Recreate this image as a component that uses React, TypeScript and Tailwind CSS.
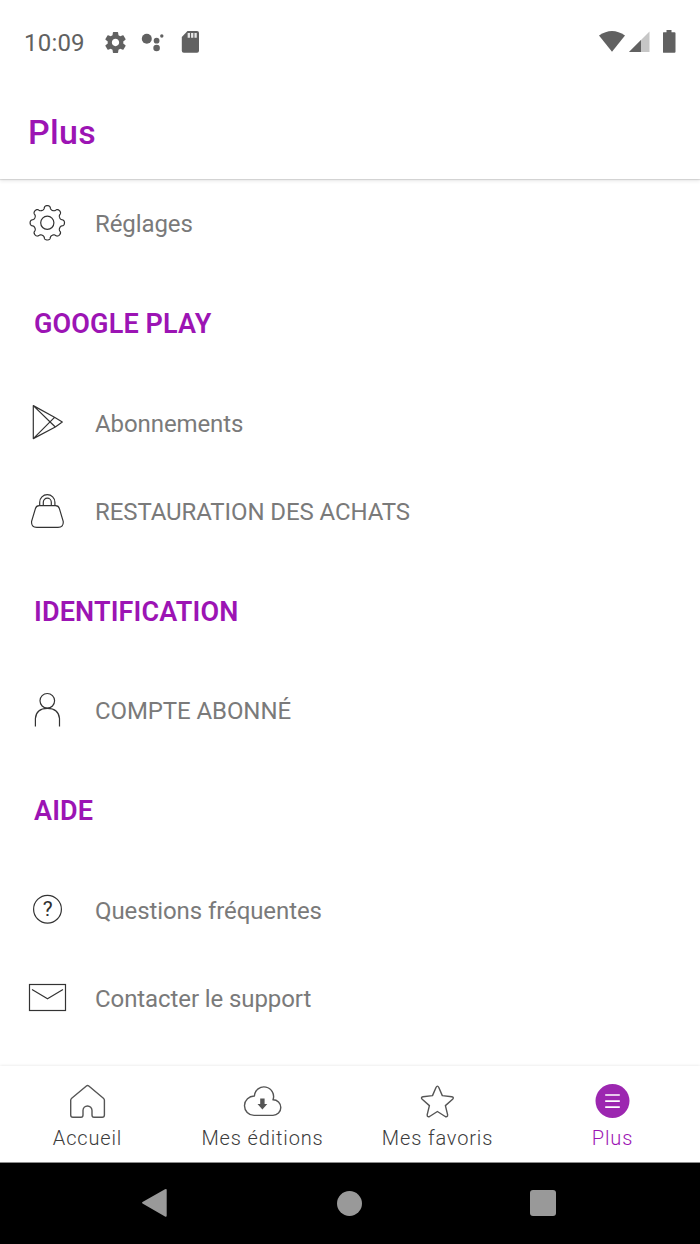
import type { ReactNode } from "react";

interface MenuItem {
  label: string;
  icon: ReactNode;
}

interface MenuSection {
  title?: string;
  items: MenuItem[];
}

// eight-lobed outline around (20.3, 19.8)
const gearPath = (() => {
  const points: string[] = [];
  for (let i = 0; i < 240; i++) {
    const a = (i / 240) * Math.PI * 2;
    const r = 15.3 + 1.9 * Math.cos(8 * a);
    const t = a + 0.035 * Math.sin(16 * a);
    points.push(
      `${(20.3 + r * Math.cos(t)).toFixed(2)} ${(19.8 + r * Math.sin(t)).toFixed(2)}`
    );
  }
  return `M${points.join("L")}Z`;
})();

function MenuIcon({ children }: { children: ReactNode }) {
  return (
    <svg
      viewBox="0 0 40 40"
      className="w-10 h-10 shrink-0"
      fill="none"
      stroke="#333333"
      strokeWidth="1.2"
      strokeLinejoin="round"
    >
      {children}
    </svg>
  );
}

const sections: MenuSection[] = [
  {
    items: [
      {
        label: "Réglages",
        icon: (
          <MenuIcon>
            <path d={gearPath} />
            <circle cx="20.3" cy="19.8" r="6.6" />
          </MenuIcon>
        ),
      },
    ],
  },
  {
    title: "GOOGLE PLAY",
    items: [
      {
        label: "Abonnements",
        icon: (
          <MenuIcon>
            <path d="M6.3 2.6V35.6L28.3 24L35.3 19L27.5 14.3L6.3 2.6L28.3 24M6.3 35.6L27.5 14.3" />
          </MenuIcon>
        ),
      },
      {
        label: "RESTAURATION DES ACHATS",
        icon: (
          <MenuIcon>
            <path d="M12.2 14.6H28.5Q31.6 14.6 32.4 17.6L36.2 30.3Q36.8 36.3 31 36.3H9.8Q4 36.3 4.6 30.3L8.4 17.6Q9.2 14.6 12.2 14.6Z" />
            <path d="M12.7 14.4V11.2A7.6 7.6 0 0 1 27.9 11.2V14.4M16.3 14.4V11.2A4 4 0 0 1 24.3 11.2V14.4" />
          </MenuIcon>
        ),
      },
    ],
  },
  {
    title: "IDENTIFICATION",
    items: [
      {
        label: "COMPTE ABONNÉ",
        icon: (
          <MenuIcon>
            <circle cx="20.3" cy="10.8" r="7.3" />
            <path d="M8.4 36.6V28.5Q9.2 18.4 20.4 18.4Q31.6 18.4 32.5 28.5V36.6" />
          </MenuIcon>
        ),
      },
    ],
  },
  {
    title: "AIDE",
    items: [
      {
        label: "Questions fréquentes",
        icon: (
          <MenuIcon>
            <circle cx="20.5" cy="19.2" r="13.9" />
            <text
              x="20.7"
              y="26.2"
              textAnchor="middle"
              fill="#2f2f2f"
              stroke="none"
              className="font-['Roboto',sans-serif] text-[21px]"
            >
              ?
            </text>
          </MenuIcon>
        ),
      },
      {
        label: "Contacter le support",
        icon: (
          <MenuIcon>
            <rect x="2.5" y="6.5" width="36" height="26" strokeLinejoin="miter" />
            <path d="M5 11.5L20.5 20.8L36 11.5" />
          </MenuIcon>
        ),
      },
    ],
  },
];

function TabIcon({ children }: { children: ReactNode }) {
  return (
    <svg
      viewBox="0 0 41 40"
      className="w-[41px] h-10"
      fill="none"
      stroke="#555555"
      strokeWidth="1.4"
      strokeLinejoin="round"
    >
      {children}
    </svg>
  );
}

const tabs = [
  {
    label: "Accueil",
    active: false,
    icon: (
      <TabIcon>
        <path d="M3.7 19.2Q3.7 18 4.7 17.2L19.4 5Q20.6 4 21.8 5L36.4 17.2Q37.4 18 37.4 19.2V34Q37.4 36.3 35.2 36.3H27Q25 36.3 25 34V29.5A4.5 4.5 0 0 0 16 29.5V34Q16 36.3 14 36.3H5.9Q3.7 36.3 3.7 34Z" />
      </TabIcon>
    ),
  },
  {
    label: "Mes éditions",
    active: false,
    icon: (
      <TabIcon>
        <path d="M12 34.4A9.7 9.7 0 0 1 12.4 15A9.6 9.6 0 1 1 31 18.8A7.8 7.8 0 0 1 31 34.4Z" />
        <path
          d="M18.2 17.4H22.6V23H25.3L20.4 28.4L15.5 23H18.2Z"
          fill="#555555"
          stroke="none"
        />
      </TabIcon>
    ),
  },
  {
    label: "Mes favoris",
    active: false,
    icon: (
      <TabIcon>
        <path d="M19 6.5Q20.4 3.8 21.8 6.5L25.3 14.6L34.8 15.7Q37.4 16.3 35.6 18.3L28.4 24.6L30.6 33.7Q30.8 36.5 28.2 35.5L20.4 30.5L12.6 35.5Q10 36.5 10.2 33.7L12.4 24.6L5.2 18.3Q3.4 16.3 6 15.7L15.5 14.6Z" />
      </TabIcon>
    ),
  },
  {
    label: "Plus",
    active: true,
    icon: (
      <TabIcon>
        <circle cx="20.5" cy="20" r="17" fill="#9c27b0" stroke="none" />
        <path d="M13.2 14H27.8M13.2 20.2H27.8M13.2 26.2H27.8" stroke="#ffffff" strokeWidth="1.7" />
      </TabIcon>
    ),
  },
];

function StatusBar() {
  return (
    <div className="flex h-[84px] shrink-0 items-center pl-6 pr-6 text-[#616161]">
      <span className="w-[79px] pt-0.5 text-[24px] leading-none tracking-[0.2px]">10:09</span>
      <svg viewBox="0 0 24 24" className="w-[25px] h-[25px]" fill="currentColor">
        <path d="M19.43 12.98c.04-.32.07-.64.07-.98s-.03-.66-.07-.98l2.11-1.65c.19-.15.24-.42.12-.64l-2-3.46c-.12-.22-.39-.3-.61-.22l-2.49 1c-.52-.4-1.08-.73-1.69-.98l-.38-2.65C14.46 2.18 14.25 2 14 2h-4c-.25 0-.46.18-.49.42l-.38 2.65c-.61.25-1.17.59-1.69.98l-2.49-1c-.23-.09-.49 0-.61.22l-2 3.46c-.13.22-.07.49.12.64l2.11 1.65c-.04.32-.07.65-.07.98s.03.66.07.98l-2.11 1.65c-.19.15-.24.42-.12.64l2 3.46c.12.22.39.3.61.22l2.49-1c.52.4 1.08.73 1.69.98l.38 2.65c.03.24.24.42.49.42h4c.25 0 .46-.18.49-.42l.38-2.65c.61-.25 1.17-.59 1.69-.98l2.49 1c.23.09.49 0 .61-.22l2-3.46c.12-.22.07-.49-.12-.64l-2.11-1.65zM12 15.5c-1.93 0-3.5-1.57-3.5-3.5s1.57-3.5 3.5-3.5 3.5 1.57 3.5 3.5-1.57 3.5-3.5 3.5z" />
      </svg>
      <svg viewBox="0 0 24 24" className="ml-3 w-6 h-6" fill="currentColor">
        <circle cx="6.8" cy="8.7" r="5" />
        <circle cx="16.6" cy="10.7" r="2.9" />
        <circle cx="21.8" cy="6" r="1.7" />
        <circle cx="16.6" cy="18" r="3.3" />
      </svg>
      <svg viewBox="0 0 20 24" className="ml-4 w-5 h-6" fill="currentColor">
        <path d="M7.5 1H17Q19 1 19 3V20.7Q19 22.7 17 22.7H3.8Q1.8 22.7 1.8 20.7V7Z" />
        <path d="M8.8 3V7.7M12.2 3V7.7M15.6 3V7.7" stroke="#ffffff" strokeOpacity="0.85" strokeWidth="2.3" />
      </svg>
      <div className="ml-auto flex items-center">
        <svg viewBox="0 0 26 24" className="w-[26px] h-6" fill="currentColor">
          <path d="M0 5.5Q13-3.5 26 5.5L13 21.7Z" />
        </svg>
        <svg viewBox="0 0 22 24" className="ml-1 w-[22px] h-6" fill="currentColor">
          <path d="M20.5 1.5V22H0Z" fill="#c6c6c6" />
          <path d="M12 10V22H0Z" />
        </svg>
        <svg viewBox="0 0 13 24" className="ml-3 w-[13px] h-6" fill="currentColor">
          <path d="M3.5 0H8.5V2.2H11.5Q12.5 2.2 12.5 3.2V21.8Q12.5 22.8 11.5 22.8H0.8Q-.2 22.8-.2 21.8V3.2Q-.2 2.2 .8 2.2H3.5Z" />
        </svg>
      </div>
    </div>
  );
}

function NavigationBar() {
  return (
    <div className="flex h-[81px] shrink-0 items-center bg-black pb-px pl-[141px]">
      <svg viewBox="0 0 26 30" className="w-[26px] h-[30px]" fill="#999999">
        <path d="M24 1.3Q25.7 .3 25.7 2V27.5Q25.7 29.3 24 28.5L1.5 15.5Q0.5 14.7 1.5 14Z" />
      </svg>
      <div className="ml-[170px] w-[25px] h-[25px] rounded-full bg-[#999999]" />
      <div className="ml-[168px] w-[26px] h-[26px] rounded-[3px] bg-[#999999]" />
    </div>
  );
}

export default function App() {
  return (
    <div className="flex h-[1244px] w-[700px] flex-col overflow-hidden bg-white font-['Roboto',sans-serif]">
      <StatusBar />

      <header className="z-10 flex h-[95px] shrink-0 items-center bg-white pl-7 pt-px shadow-[0_1px_1px_rgba(0,0,0,0.12),0_3px_3px_rgba(0,0,0,0.06)]">
        <h1 className="text-[34px] font-medium leading-none tracking-[0.3px] text-[#9c14b4]">
          Plus
        </h1>
      </header>

      <main className="flex-1 overflow-hidden">
        {sections.map((section, index) => (
          <section key={index}>
            {section.title && (
              <h2 className="flex h-[110.75px] items-center pl-[34px] pt-[3px] text-[27px] font-semibold leading-none tracking-[0.15px] text-[#9c14b4]">
                {section.title}
              </h2>
            )}
            {section.items.map((item) => (
              <div key={item.label} className="flex h-[88.5px] items-center gap-7 pl-[27px]">
                {item.icon}
                <span className="pt-0.5 text-[24px] leading-none tracking-[-0.09px] text-[#7a7a7a]">
                  {item.label}
                </span>
              </div>
            ))}
          </section>
        ))}
      </main>

      <nav className="grid h-[97px] shrink-0 grid-cols-4 border-b border-[#8c8c8c] shadow-[0_0_3px_rgba(0,0,0,0.12)]">
        {tabs.map((tab) => (
          <div key={tab.label} className="flex flex-col items-center pt-[15px]">
            {tab.icon}
            <span
              className={`mt-[7px] text-[20px] font-light leading-none tracking-[0.85px] ${
                tab.active ? "text-[#9c14b4]" : "text-[#3c3c3c]"
              }`}
            >
              {tab.label}
            </span>
          </div>
        ))}
      </nav>

      <NavigationBar />
    </div>
  );
}
